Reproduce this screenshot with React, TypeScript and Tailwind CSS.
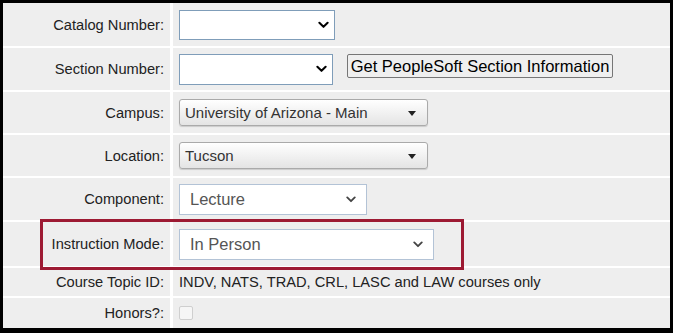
import * as React from "react";

// Course section form — label column on the left, field column on the right,
// white 2px seams between the grey cells.

const font = { fontFamily: '"Liberation Sans", Arial, sans-serif' };

function Chevron({ className }: { className?: string }) {
  return (
    <svg viewBox="0 0 12 8" className={className} fill="none" aria-hidden>
      <path d="M1.5 1.5 6 6l4.5-4.5" stroke="currentColor" strokeWidth="2.2" strokeLinecap="round" strokeLinejoin="round" />
    </svg>
  );
}

function Caret() {
  return (
    <svg viewBox="0 0 8 5" className="h-[5px] w-[8px]" aria-hidden>
      <path d="M0 0h8L4 5z" fill="#222" />
    </svg>
  );
}

// Windows-style blue outline select with a bold chevron
function PlainSelect({ w, h }: { w: string; h: string }) {
  return (
    <div className={`flex items-center justify-end border border-[#7f9db9] bg-white pr-[5px] ${w} ${h}`}>
      <Chevron className="h-[8px] w-[11px] text-black" />
    </div>
  );
}

// Old gradient select with a solid caret
function GradientSelect({ value }: { value: string }) {
  return (
    <div className="flex h-[27px] w-[249px] items-center justify-between rounded-[3px] border border-[#aaaaaa] bg-gradient-to-b from-white to-[#e4e4e4] pl-[5px] pr-[11px] pt-[2px] text-[15px] text-[#333] shadow-[0_1px_1px_rgba(0,0,0,0.15)]">
      <span>{value}</span>
      <Caret />
    </div>
  );
}

// Lighter bootstrap-ish select
function SoftSelect({ value, w }: { value: string; w: string }) {
  return (
    <div className={`flex h-[31px] items-center justify-between border border-[#b3c3d6] bg-white pl-[10px] pr-[10px] text-[16.5px] text-[#555] ${w}`}>
      <span>{value}</span>
      <Chevron className="h-[7px] w-[10px] text-[#444]" />
    </div>
  );
}

function Row({ label, h, children }: { label: string; h: string; children?: React.ReactNode }) {
  return (
    <>
      <div className={`flex items-center justify-end bg-[#eeeeee] pr-[6px] text-[14.67px] text-[#222] ${h}`}>{label}</div>
      <div className={`flex items-center gap-[14px] bg-[#eeeeee] pl-[6px] ${h}`}>{children}</div>
    </>
  );
}

export default function App() {
  return (
    <div style={font} className="relative h-[333px] w-[673px] border-[3px] border-b-[5px] border-black bg-white">
      <div className="grid grid-cols-[167px_1fr] gap-x-[3px] gap-y-[2px]">
        <Row label="Catalog Number:" h="h-[43px]">
          <PlainSelect w="w-[156px]" h="h-[30px]" />
        </Row>
        <Row label="Section Number:" h="h-[42px]">
          <PlainSelect w="w-[154px]" h="h-[31px]" />
          <button className="mb-[6px] h-[24px] w-[266px] rounded-[2px] border border-[#767676] bg-[#efefef] text-[16.5px] leading-none text-black">
            Get PeopleSoft Section Information
          </button>
        </Row>
        <Row label="Campus:" h="h-[41px]">
          <GradientSelect value="University of Arizona - Main" />
        </Row>
        <Row label="Location:" h="h-[41px]">
          <GradientSelect value="Tucson" />
        </Row>
        <Row label="Component:" h="h-[42px]">
          <SoftSelect value="Lecture" w="w-[188px]" />
        </Row>
        <Row label="Instruction Mode:" h="h-[44px]">
          <SoftSelect value="In Person" w="w-[255px]" />
        </Row>
        <Row label="Course Topic ID:" h="h-[28px]">
          <span className="text-[14.67px] text-[#222]">INDV, NATS, TRAD, CRL, LASC and LAW courses only</span>
        </Row>
        <Row label="Honors?:" h="h-[30px]">
          <span className="h-[14px] w-[14px] rounded-[2px] border border-[#cfcfcf] bg-[#f6f6f6]" />
        </Row>
      </div>
      {/* annotation box around Instruction Mode */}
      <div className="pointer-events-none absolute left-[37px] top-[216px] h-[51px] w-[424px] border-[3px] border-[#9d1a33]" />
    </div>
  );
}
